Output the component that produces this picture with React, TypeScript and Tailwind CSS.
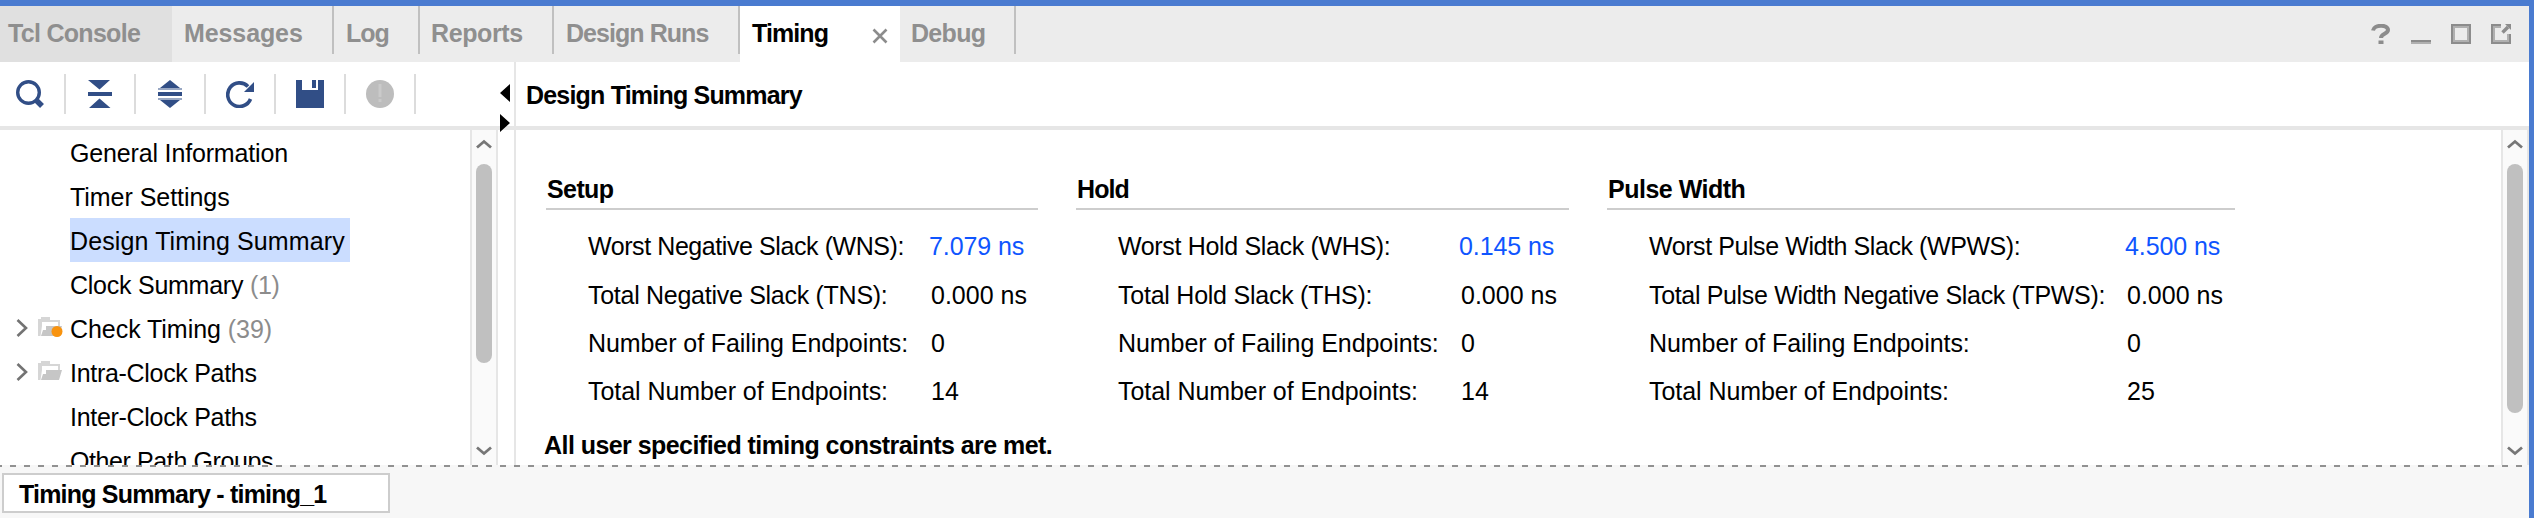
import React from "react";

type Row = { label: string; value: string; link?: boolean; track: string };
type Group = { title: string; titleTrack: string; box: string; labelCol: string; rows: Row[] };

const groups: Group[] = [
  {
    title: "Setup",
    titleTrack: "tracking-[-0.6px]",
    box: "w-[492px] mr-[38px]",
    labelCol: "w-[343px]",
    rows: [
      { label: "Worst Negative Slack (WNS):", value: "7.079 ns", link: true, track: "tracking-[-0.42px]" },
      { label: "Total Negative Slack (TNS):", value: "0.000 ns", track: "tracking-[-0.28px]" },
      { label: "Number of Failing Endpoints:", value: "0", track: "tracking-[-0.08px]" },
      { label: "Total Number of Endpoints:", value: "14", track: "tracking-[-0.06px]" },
    ],
  },
  {
    title: "Hold",
    titleTrack: "tracking-[-0.9px]",
    box: "w-[493px] mr-[38px]",
    labelCol: "w-[343px]",
    rows: [
      { label: "Worst Hold Slack (WHS):", value: "0.145 ns", link: true, track: "tracking-[-0.34px]" },
      { label: "Total Hold Slack (THS):", value: "0.000 ns", track: "tracking-[-0.24px]" },
      { label: "Number of Failing Endpoints:", value: "0", track: "tracking-[-0.06px]" },
      { label: "Total Number of Endpoints:", value: "14", track: "tracking-[-0.06px]" },
    ],
  },
  {
    title: "Pulse Width",
    titleTrack: "tracking-[-0.5px]",
    box: "w-[628px]",
    labelCol: "w-[478px]",
    rows: [
      { label: "Worst Pulse Width Slack (WPWS):", value: "4.500 ns", link: true, track: "tracking-[-0.42px]" },
      { label: "Total Pulse Width Negative Slack (TPWS):", value: "0.000 ns", track: "tracking-[-0.34px]" },
      { label: "Number of Failing Endpoints:", value: "0", track: "tracking-[-0.06px]" },
      { label: "Total Number of Endpoints:", value: "25", track: "tracking-[-0.06px]" },
    ],
  },
];

function TimingGroup({ group }: { group: Group }) {
  return (
    <section className={`shrink-0 ${group.box}`}>
      <h3 className={`h-[40px] border-b-2 border-[#cdcdcd] pl-px font-bold leading-[38px] ${group.titleTrack}`}>
        {group.title}
      </h3>
      <div className="pt-[12px] pl-[42px]">
        {group.rows.map((row, i) => (
          <div key={row.label} className={`flex leading-[48px] ${i === 0 ? "h-[49px]" : "h-[48px]"}`}>
            <span className={`shrink-0 ${group.labelCol} ${row.track}`}>{row.label}</span>
            <span className={row.link ? "-ml-[2px] tracking-[-0.1px] text-[#0f55ff]" : ""}>{row.value}</span>
          </div>
        ))}
      </div>
    </section>
  );
}

const tree = [
  { name: "General Information", track: "tracking-[-0.16px]" },
  { name: "Timer Settings", track: "tracking-[-0.04px]" },
  { name: "Design Timing Summary", track: "tracking-[0.12px]", selected: true },
  { name: "Clock Summary", count: "(1)", track: "tracking-[-0.25px]" },
  { name: "Check Timing", count: "(39)", track: "tracking-[-0.05px]", folder: "warning" },
  { name: "Intra-Clock Paths", track: "tracking-[-0.3px]", folder: "plain" },
  { name: "Inter-Clock Paths", track: "tracking-[-0.3px]" },
  { name: "Other Path Groups", track: "tracking-[-0.4px]" },
];

function FolderIcon({ warning }: { warning: boolean }) {
  return (
    <svg className="ml-[10px] h-[24px] w-[26px]" viewBox="0 0 26 24">
      <path d="M1 3h2V1h9v3h10v6h-2V6H4v4L2.500 20H0V3z" fill="#d6d6d6" />
      <path d="M8 10h16l-3 10H3l2-6h3z" fill="#c6c6c6" />
      {warning && <circle cx="19" cy="15.500" r="5.500" fill="#f8930f" />}
    </svg>
  );
}

function TreeRow({ item }: { item: (typeof tree)[number] }) {
  return (
    <div className="flex h-[44px] shrink-0 items-center">
      <div className="flex w-[70px] shrink-0 items-center pl-[16px]">
        {item.folder && (
          <>
            <svg className="h-[20px] w-[12px]" viewBox="0 0 12 20">
              <path d="M1.500 2 10 10 1.500 18" fill="none" stroke="#737373" strokeWidth="2.600" />
            </svg>
            <FolderIcon warning={item.folder === "warning"} />
          </>
        )}
      </div>
      <div
        className={`h-[44px] pt-[2px] leading-[42px] whitespace-pre ${item.track} ${item.selected ? "w-[280px] bg-[#cbddff]" : ""}`}
      >
        {item.name}
        {item.count && <span className="text-[#8c8c8c]"> {item.count}</span>}
      </div>
    </div>
  );
}

function ScrollBar({ thumb }: { thumb: string }) {
  return (
    <div className="flex w-[28px] shrink-0 flex-col items-center border-x-2 border-[#e6e6e6] bg-[#fafafa]">
      <svg className="mt-[9px] h-[10px] w-[16px] shrink-0" viewBox="0 0 16 10">
        <path d="M1 8.500 8 2.500 15 8.500" fill="none" stroke="#777" strokeWidth="2.800" />
      </svg>
      <div className={`mt-[15px] w-[16px] shrink-0 rounded-full bg-[#c0c0c0] ${thumb}`} />
      <svg className="mt-auto mb-[9px] h-[10px] w-[16px] shrink-0" viewBox="0 0 16 10">
        <path d="M1 1.500 8 7.500 15 1.500" fill="none" stroke="#777" strokeWidth="2.800" />
      </svg>
    </div>
  );
}

function Tool({ children, first }: { children: React.ReactNode; first?: boolean }) {
  return (
    <div className={`flex h-[40px] items-center justify-center border-r-2 border-[#dcdcdc] ${first ? "w-[66px] pr-[4px]" : "w-[70px]"}`}>
      <svg className="h-[28px] w-[28px]" viewBox="0 0 28 28">
        {children}
      </svg>
    </div>
  );
}

function Toolbar() {
  return (
    <div className="flex h-[64px] shrink-0 items-center">
      <Tool first>
        <circle cx="12.500" cy="12.500" r="10.800" fill="none" stroke="#314e86" strokeWidth="3.400" />
        <path d="M20 20l6 6" stroke="#314e86" strokeWidth="5.500" />
      </Tool>
      <Tool>
        <path d="M2 0h22L13.500 9.500zM2 12h24v4H2zM13.500 18.500l11 9.500H3z" fill="#314e86" />
      </Tool>
      <Tool>
        <path d="M14 0l10 8H4zM2 12h24v4H2zM4 20h20l-10 8z" fill="#314e86" />
        <path d="M2 8h24v2H2zM2 18h24v2H2z" fill="#98a7c3" />
      </Tool>
      <Tool>
        <path d="M22 6.500A11.800 11.800 0 1 0 24.500 19" fill="none" stroke="#314e86" strokeWidth="3.600" />
        <path d="M28 2v10H18z" fill="#314e86" />
      </Tool>
      <Tool>
        <path d="M0 0h6v10h16V0h6v28H0zM16 0h4v8h-4z" fill="#314e86" />
      </Tool>
      <Tool>
        <circle cx="14" cy="14" r="14" fill="#bdbdbd" />
        <path d="M12.500 4h3v13h-3zM12.500 19h3v3h-3z" fill="#cacaca" />
      </Tool>
    </div>
  );
}

const tabs = [
  { name: "Tcl Console", cls: "w-[172px] bg-[#e0e0e0] pl-[8px] tracking-[-0.7px]" },
  { name: "Messages", cls: "w-[162px] pl-[12px] tracking-[-0.1px]", line: true },
  { name: "Log", cls: "w-[86px] pl-[12px] tracking-[-1px]", line: true },
  { name: "Reports", cls: "w-[134px] pl-[11px] tracking-[-0.4px]", line: true },
  { name: "Design Runs", cls: "w-[186px] pl-[12px] tracking-[-0.95px]", line: true },
  { name: "Timing", cls: "w-[160px] bg-white pl-[12px] tracking-[-0.9px] text-black", active: true },
  { name: "Debug", cls: "w-[116px] pl-[11px] tracking-[-0.7px]", line: true },
];

function TabBar() {
  return (
    <div className="flex h-[56px] shrink-0 bg-[#ececec] font-bold text-[#8f8f8f]">
      {tabs.map((t) => (
        <div key={t.name} className={`flex shrink-0 justify-between leading-[54px] ${t.cls}`}>
          {t.name}
          {t.line && <span className="h-[48px] w-[2px] bg-[#c0c0c0]" />}
          {t.active && (
            <svg className="mt-[22px] mr-[12px] h-[16px] w-[16px]" viewBox="0 0 16 16">
              <path d="M1.500 1.500l13 13M14.500 1.500l-13 13" stroke="#8c8c8c" strokeWidth="2.600" />
            </svg>
          )}
        </div>
      ))}
      <div className="mt-[18px] mr-[18px] ml-auto flex h-[20px] gap-[20px]">
        <svg className="h-[20px] w-[20px]" viewBox="0 0 20 20">
          <path d="M2 6.500C3 .5 17 0 17 6c0 4-7 3.500-7 8" fill="none" stroke="#8c8c8c" strokeWidth="4" />
          <path d="M7.500 16.500h5V20h-5z" fill="#8c8c8c" />
        </svg>
        <svg className="h-[20px] w-[20px]" viewBox="0 0 20 20">
          <path d="M0 16h20v2H0z" fill="#8c8c8c" />
          <path d="M0 18h20v2H0z" fill="#b0b0b0" />
        </svg>
        <svg className="h-[20px] w-[20px]" viewBox="0 0 20 20">
          <path d="M3 3h14v14H3z" fill="none" stroke="#b0b0b0" strokeWidth="2" />
          <path d="M1 1h18v18H1z" fill="none" stroke="#8c8c8c" strokeWidth="2" />
        </svg>
        <svg className="h-[20px] w-[20px]" viewBox="0 0 20 20">
          <path d="M10 3H3v14h14v-7" fill="none" stroke="#b0b0b0" strokeWidth="2" />
          <path d="M10 1H1v18h18v-9" fill="none" stroke="#8c8c8c" strokeWidth="2" />
          <path d="M11.500 8.500L17 3" stroke="#8c8c8c" strokeWidth="3.400" />
          <path d="M14 0h6v6z" fill="#8c8c8c" />
        </svg>
      </div>
    </div>
  );
}

export default function App() {
  return (
    <div className="flex h-[518px] w-[2534px] flex-col overflow-hidden border-t-6 border-r-5 border-[#4a7bd0] bg-white font-['Liberation_Sans',Arial,sans-serif] text-[25px] text-black">
      <TabBar />
      <div className="flex h-[403px] shrink-0">
        <aside className="relative flex w-[516px] shrink-0 flex-col border-r-2 border-[#e6e6e6]">
          <Toolbar />
          <div className="h-[4px] shrink-0 bg-[#e6e6e6]" />
          <div className="flex h-[335px]">
            <div className="flex w-[470px] flex-col overflow-hidden">
              {tree.map((item) => (
                <TreeRow key={item.name} item={item} />
              ))}
            </div>
            <ScrollBar thumb="h-[199px]" />
          </div>
          <svg className="absolute top-[22px] left-[500px] h-[48px] w-[10px]" viewBox="0 0 10 48">
            <path d="M10 0v18L0 9zM0 30v18l10-9z" fill="#000" />
          </svg>
        </aside>
        <main className="flex flex-1 flex-col">
          <h2 className="h-[64px] shrink-0 pl-[10px] text-[25px] leading-[66px] font-bold tracking-[-0.8px]">
            Design Timing Summary
          </h2>
          <div className="h-[4px] shrink-0 bg-[#e6e6e6]" />
          <div className="flex h-[335px]">
            <div className="flex-1 overflow-hidden pt-[40px] pl-[30px]">
              <div className="flex h-[256px]">
                {groups.map((g) => (
                  <TimingGroup key={g.title} group={g} />
                ))}
              </div>
              <p className="-ml-[2px] leading-[38px] font-bold tracking-[-0.55px]">
                All user specified timing constraints are met.
              </p>
            </div>
            <ScrollBar thumb="h-[249px]" />
          </div>
        </main>
      </div>
      <footer className="h-[53px] shrink-0 bg-[#f7f7f7]">
        <svg className="block h-[2px] w-full">
          <line x1="-4" y1="1" x2="2529" y2="1" stroke="#919191" strokeWidth="2" strokeDasharray="6 8" />
        </svg>
        <div className="mt-[6px] ml-[2px] h-[40px] w-[388px] border-2 border-[#cdcdcd] bg-white pl-[15px] leading-[38px] font-bold tracking-[-0.8px]">
          Timing Summary - timing_1
        </div>
      </footer>
    </div>
  );
}
